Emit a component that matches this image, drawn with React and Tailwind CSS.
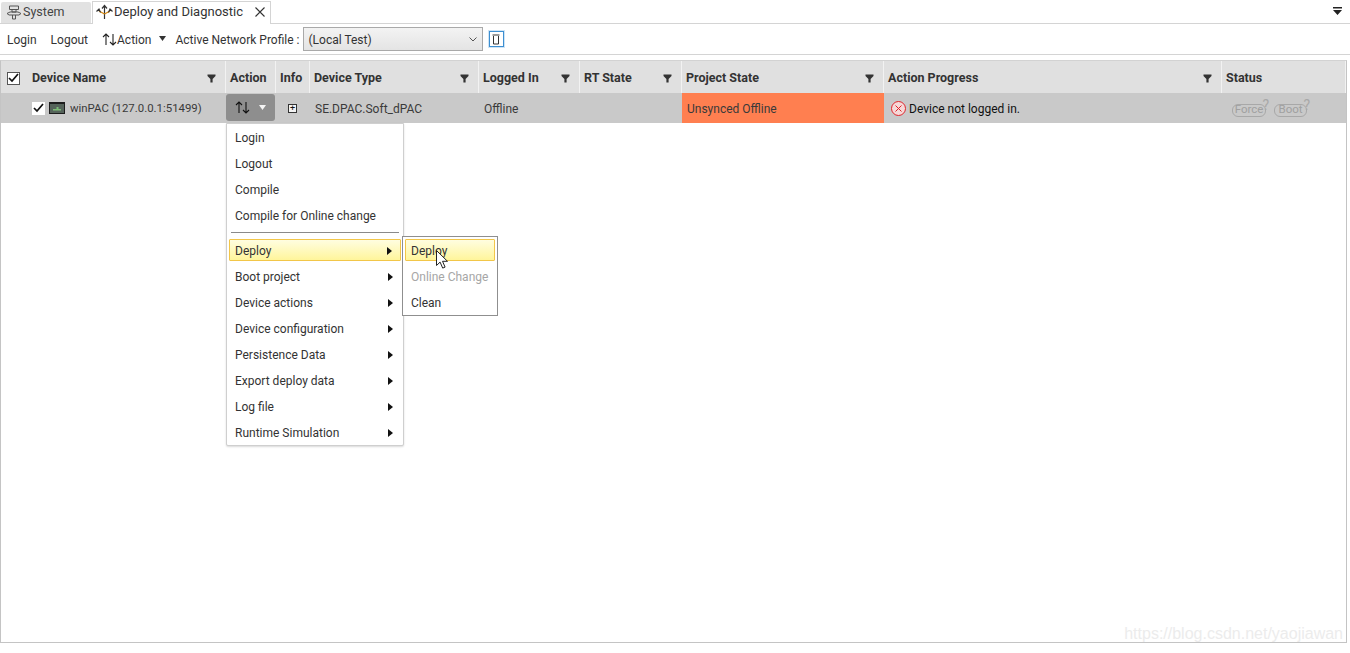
import React from 'react'

const font = { fontFamily: 'Roboto, sans-serif' }

function FilterIcon() {
  return (
    <svg width="9" height="9" viewBox="0 0 9 9" className="shrink-0">
      <path d="M0.5 0.5h8v1.5L5.6 5v3.5H3.4V5L0.5 2z" fill="#333" />
    </svg>
  )
}

function ArrowsIcon({ color = '#222' }) {
  return (
    <svg width="15" height="13" viewBox="0 0 15 13" fill="none" stroke={color} strokeWidth="1.1">
      <path d="M4 12V1M1 4l3-3 3 3" />
      <path d="M11 1v11M8 9l3 3 3-3" />
    </svg>
  )
}

function SystemIcon() {
  return (
    <svg width="16" height="15" viewBox="0 0 16 15" fill="none" stroke="#555" strokeWidth="1">
      <path d="M3.5 1h9v3.5h-9zM6 4.5v2.5h4V4.5M1 8.5l3-1.5h8l3 1.5-2 1.5H3zM6.5 10v4h3v-4" />
    </svg>
  )
}

function DeployIcon() {
  return (
    <svg width="17" height="16" viewBox="0 0 17 16" fill="none" strokeWidth="1.2">
      <path d="M8.5 15V2M6 4.5l2.5-3 2.5 3" stroke="#333" />
      <path d="M8.5 10 3 7" stroke="#d98a12" />
      <path d="M8.5 10 14 7" stroke="#d98a12" />
      <path d="M0.5 7.5 3 5l1.5 3.5M16.5 7.5 14 5l-1.5 3.5" stroke="#333" />
    </svg>
  )
}

function DeviceIcon() {
  return (
    <svg width="16" height="12" viewBox="0 0 16 12">
      <rect x="0" y="0" width="16" height="12" fill="#1d1d1d" />
      <rect x="1" y="2" width="14" height="9" fill="#55635a" />
      <path d="M4 7h8v1.5H4zM7.5 5h2v2h-2z" fill="#7dbb76" />
    </svg>
  )
}

function CheckBox({ boxed }) {
  return (
    <span className={`flex items-center justify-center w-[13px] h-[13px] bg-white ${boxed ? 'border border-[#555]' : ''}`}>
      <svg width="11" height="10" viewBox="0 0 11 10" fill="none" stroke="#111" strokeWidth="1.7">
        <path d="M1 5l3 3 6-7" />
      </svg>
    </span>
  )
}

function Pill({ label, width }) {
  return (
    <span className="relative flex items-center mt-[4px]">
      <span className={`flex items-center justify-center h-[13px] border border-[#a8a8a8] rounded-[6px] text-[11.5px] leading-none text-[#a0a0a0] ${width}`}>{label}</span>
      <span className="absolute -right-[3px] -top-[6px] text-[14px] leading-none text-[#a8a8a8]">?</span>
    </span>
  )
}

const headers = [
  { label: 'Action', width: 'w-[50px]' },
  { label: 'Info', width: 'w-[34px]' },
  { label: 'Device Type', width: 'w-[169px]', filter: true },
  { label: 'Logged In', width: 'w-[101px]', filter: true },
  { label: 'RT State', width: 'w-[102px]', filter: true },
  { label: 'Project State', width: 'w-[202px]', filter: true },
  { label: 'Action Progress', width: 'w-[338px]', filter: true },
  { label: 'Status', width: 'flex-1' },
]

const menuTop = ['Login', 'Logout', 'Compile', 'Compile for Online change']
const menuSub = ['Boot project', 'Device actions', 'Device configuration', 'Persistence Data', 'Export deploy data', 'Log file', 'Runtime Simulation']

function SubArrow() {
  return (
    <svg width="5" height="8" viewBox="0 0 5 8" className="shrink-0">
      <path d="M0 0l5 4-5 4z" fill="#111" />
    </svg>
  )
}

function ActionMenu() {
  return (
    <div className="absolute left-[226px] top-[123px] w-[178px] h-[323px] bg-white border border-[#cfcfcf] rounded-b-[2px] shadow-[0_1px_2px_rgba(0,0,0,0.15)] text-[12px] text-[#333] z-10">
      <div className="pt-[1px]">
        {menuTop.map((item) => (
          <div key={item} className="flex items-center h-[26px] pl-[8px]">{item}</div>
        ))}
      </div>
      <div className="h-px bg-[#8a8a8a] mx-[4px] mt-[3px] mb-[6px]" />
      <div className="flex items-center justify-between h-[22px] mx-[2px] pl-[5px] pr-[8px] mb-[3px] pt-[1px] border border-[#f2c649] rounded-[1px] bg-gradient-to-b from-[#fffde0] to-[#fff59a]">
        <span>Deploy</span>
        <SubArrow />
      </div>
      {menuSub.map((item) => (
        <div key={item} className="flex items-center justify-between h-[26px] pl-[8px] pr-[10px]">
          <span>{item}</span>
          <SubArrow />
        </div>
      ))}

      <div className="absolute left-[175px] top-[112px] w-[96px] h-[80px] bg-white border border-[#8f8f8f] pt-[2px]">
        <div className="flex items-center h-[22px] mx-[2px] pl-[5px] pt-[1px] border border-[#f2c649] rounded-[1px] bg-gradient-to-b from-[#fffde0] to-[#fff59a]">Deploy</div>
        <div className="flex items-center h-[26px] mt-[3px] pl-[8px] text-[#a6a6a6]">Online Change</div>
        <div className="flex items-center h-[26px] pl-[8px]">Clean</div>
        <svg width="12" height="19" viewBox="0 0 12 19" className="absolute left-[33px] top-[13px]">
          <path d="M0.5 0.5v15l3.6-3.4 2.6 6 2.4-1-2.6-5.8h5z" fill="#fff" stroke="#222" strokeWidth="1" />
        </svg>
      </div>
    </div>
  )
}

export default function App() {
  return (
    <div className="relative w-[1350px] h-[653px] bg-white overflow-hidden text-[12px] text-[#333]" style={font}>
      {/* tabs */}
      <div className="flex items-end justify-between h-[24px] border-b border-[#d4d4d4] pl-[1px] pr-[8px]">
        <div className="flex items-end gap-[1px] h-[23px]">
          <div className="flex items-center gap-[1px] w-[90px] h-[21px] pl-[5px] bg-[#e2e2e2] rounded-t-[2px] text-[12.5px] text-[#444]">
            <SystemIcon />
            <span>System</span>
          </div>
          <div className="flex items-center gap-[1px] w-[179px] h-[23px] -mb-px pl-[3px] pr-[5px] pb-[2px] bg-white border border-b-0 border-[#d4d4d4] text-[13px]">
            <DeployIcon />
            <span className="flex-1 whitespace-nowrap">Deploy and Diagnostic</span>
            <svg width="10" height="10" viewBox="0 0 10 10" fill="none" stroke="#333" strokeWidth="1.1">
              <path d="M0.5 0.5l9 9M9.5 0.5l-9 9" />
            </svg>
          </div>
        </div>
        <svg width="9" height="9" viewBox="0 0 9 9" className="mb-[7px]">
          <path d="M0 0h9v1.6H0zM0 3h9L4.5 8z" fill="#222" />
        </svg>
      </div>

      {/* toolbar */}
      <div className="flex items-center h-[31px] border-b border-[#d4d4d4] pl-[7px] whitespace-nowrap">
        <span className="pt-[2px]">Login</span>
        <span className="ml-[14px] pt-[2px]">Logout</span>
        <span className="ml-[14px] flex items-center">
          <ArrowsIcon />
          <span className="pt-[2px]">Action</span>
        </span>
        <svg width="7" height="5" viewBox="0 0 7 5" className="ml-[8px] mb-[2px]">
          <path d="M0 0h7L3.5 5z" fill="#333" />
        </svg>
        <span className="ml-[9px] pt-[2px]">Active Network Profile :</span>
        <div className="flex items-center justify-between ml-[3px] w-[180px] h-[24px] px-[5px] border border-[#a9a9a9] bg-gradient-to-b from-[#f3f3f3] to-[#e4e4e4]">
          <span className="pt-[1px]">(Local Test)</span>
          <svg width="8" height="5" viewBox="0 0 8 5" fill="none" stroke="#555" strokeWidth="1">
            <path d="M0.5 0.5L4 4l3.5-3.5" />
          </svg>
        </div>
        <div className="flex items-center justify-center ml-[6px] w-[15px] h-[16px] border border-[#3d8fd1] outline outline-1 outline-[#cfe4f5]">
          <svg width="8" height="11" viewBox="0 0 8 11" fill="none" stroke="#333" strokeWidth="1">
            <path d="M1.5 2v8h5V2M0.5 1h7" />
          </svg>
        </div>
      </div>

      {/* grid */}
      <div className="mt-[5px] h-[583px] w-[1347px] border border-[#c4c4c4] border-t-[#d2d2d2]">
        <div className="flex h-[32px] bg-[#e0e0e0] font-bold text-[12.5px] text-[#333]">
          <div className="flex items-center w-[225px] pl-[6px] pr-[9px] pt-[2px] border-r border-[#f2f2f2]">
            <CheckBox boxed />
            <span className="flex-1 ml-[12px]">Device Name</span>
            <FilterIcon />
          </div>
          {headers.map((h) => (
            <div key={h.label} className={`flex items-center justify-between pl-[4px] pr-[9px] pt-[2px] border-r border-[#f2f2f2] whitespace-nowrap ${h.width}`}>
              <span>{h.label}</span>
              {h.filter && <FilterIcon />}
            </div>
          ))}
        </div>
        <div className="flex h-[30px] bg-[#c9c9c9] text-[#3a3a3a]">
          <div className="flex items-center w-[225px] pl-[31px]">
            <CheckBox />
            <span className="ml-[4px]"><DeviceIcon /></span>
            <span className="ml-[5px] pt-[2px] text-[11.4px] whitespace-nowrap">winPAC (127.0.0.1:51499)</span>
          </div>
          <div className="flex items-center justify-center gap-[9px] w-[49px] h-[27px] mt-[1px] bg-[#8e8e8e] rounded-[3px]">
            <ArrowsIcon color="#111" />
            <svg width="7" height="5" viewBox="0 0 7 5">
              <path d="M0 0h7L3.5 5z" fill="#f4f4f4" />
            </svg>
          </div>
          <div className="flex items-center justify-center w-[35px]">
            <span className="flex items-center justify-center w-[9px] h-[9px] bg-[#f3f3f3] border border-[#333] text-[9px] leading-none text-[#111]">+</span>
          </div>
          <div className="flex items-center w-[169px] pl-[5px] pt-[2px]">SE.DPAC.Soft_dPAC</div>
          <div className="flex items-center w-[101px] pl-[5px] pt-[2px]">Offline</div>
          <div className="w-[102px]" />
          <div className="flex items-center w-[202px] pl-[5px] pt-[2px] bg-[#ff7f50]">Unsynced Offline</div>
          <div className="flex items-center w-[338px] pl-[7px] text-[#111]">
            <svg width="15" height="15" viewBox="0 0 15 15" fill="none" stroke="#e0242b" strokeWidth="1">
              <circle cx="7.5" cy="7.5" r="7" fill="#f6d9d8" />
              <path d="M4.5 4.5l6 6M10.5 4.5l-6 6" />
            </svg>
            <span className="ml-[3px] pt-[2px]">Device not logged in.</span>
          </div>
          <div className="flex items-center flex-1 gap-[8px] pl-[10px]">
            <Pill label="Force" width="w-[34px]" />
            <Pill label="Boot" width="w-[33px]" />
          </div>
        </div>
      </div>

      <ActionMenu />

      <span className="absolute right-[7px] top-[626px] text-[16px] leading-none text-[#ececec] whitespace-nowrap" style={{ fontFamily: '"Liberation Sans", sans-serif' }}>
        https://blog.csdn.net/yaojiawan
      </span>
    </div>
  )
}
